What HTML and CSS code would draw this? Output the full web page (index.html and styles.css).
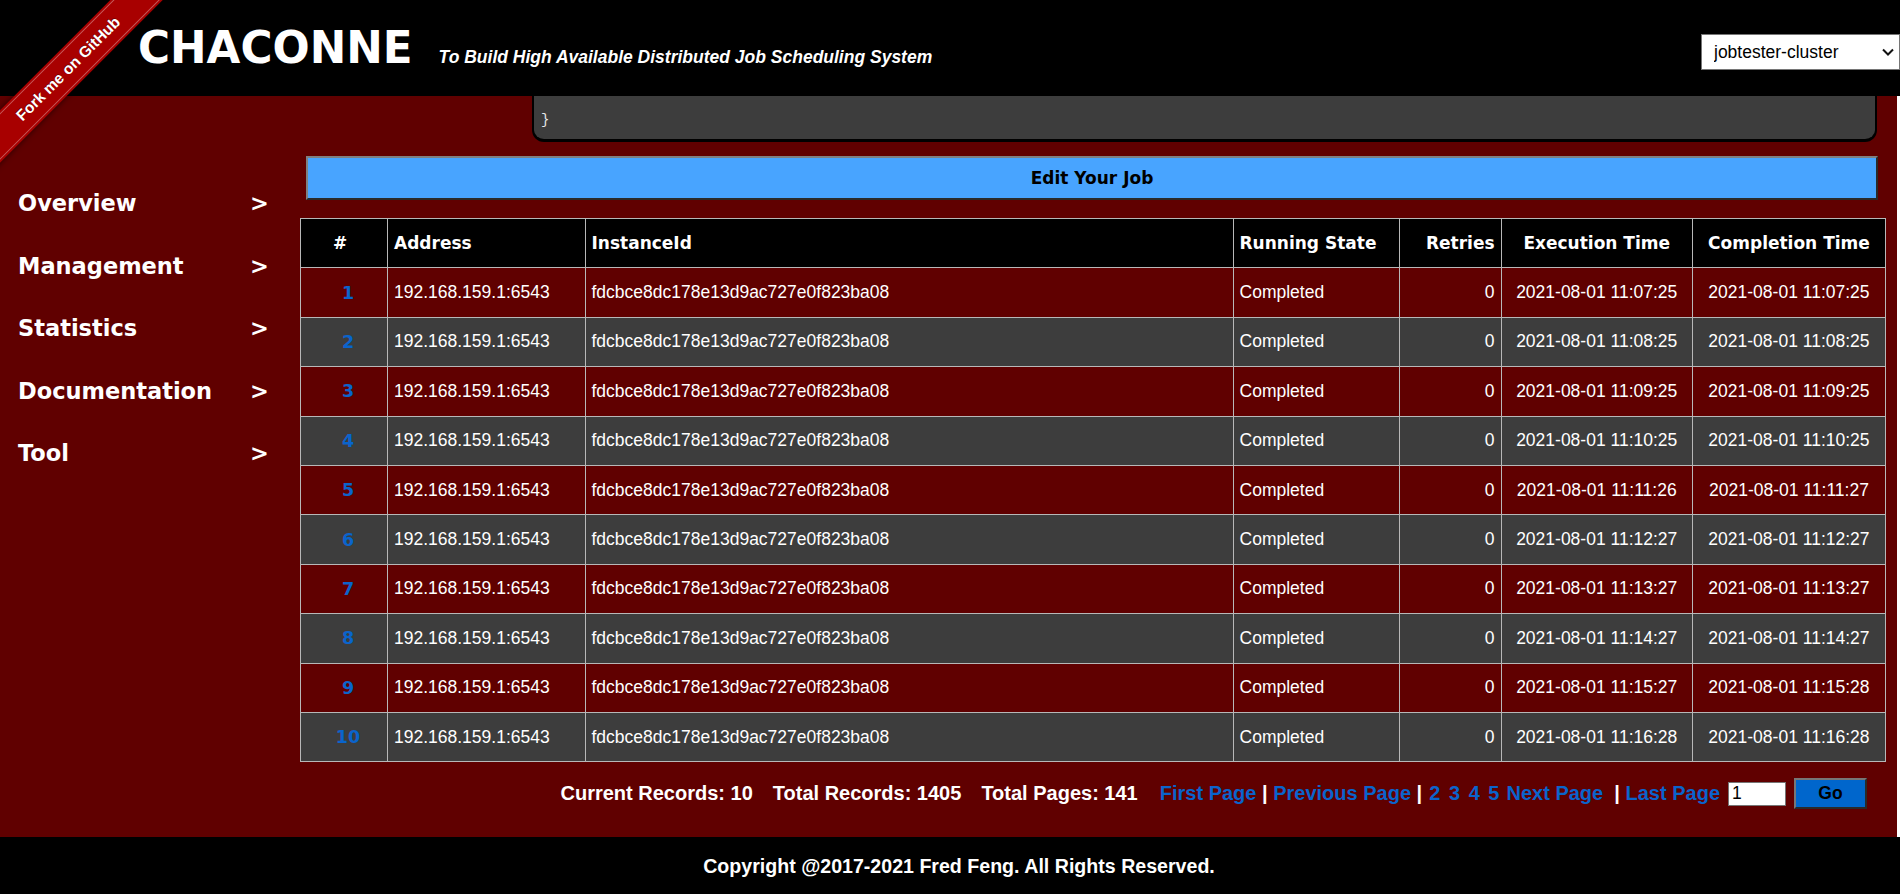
FILE: index.html
```html
<!DOCTYPE html>
<html lang="en">
<head>
<meta charset="utf-8">
<title>Chaconne</title>
<link rel="stylesheet" href="styles.css">
</head>
<body>
<div class="ribbon-wrap"><div class="ribbon">Fork me on GitHub</div></div>
<header class="topbar">
  <div class="brand">
    <span class="brand-title">CHACONNE</span>
    <span class="brand-sub">To Build High Available Distributed Job Scheduling System</span>
  </div>
  <div class="cluster">
    <select class="cluster-select"><option>jobtester-cluster</option></select>
    <svg class="chev" width="12" height="8" viewBox="0 0 12 8"><path d="M1 1.5 L6 6.5 L11 1.5" fill="none" stroke="#111" stroke-width="2"/></svg>
  </div>
</header>
<div class="main">
  <nav class="sidebar">
    <div class="nav-item"><span>Overview</span><span class="arrow">&gt;</span></div>
    <div class="nav-item"><span>Management</span><span class="arrow">&gt;</span></div>
    <div class="nav-item"><span>Statistics</span><span class="arrow">&gt;</span></div>
    <div class="nav-item"><span>Documentation</span><span class="arrow">&gt;</span></div>
    <div class="nav-item"><span>Tool</span><span class="arrow">&gt;</span></div>
  </nav>
  <section class="content">
    <div class="code-box"><pre class="code">}</pre></div>
    <button class="edit-btn">Edit Your Job</button>
    <table class="grid">
      <colgroup>
        <col style="width:87px"><col style="width:197.5px"><col style="width:648px"><col style="width:166px"><col style="width:102px"><col style="width:191.4px"><col style="width:193px">
      </colgroup>
      <thead>
        <tr><th class="c hash">#</th><th>Address</th><th>InstanceId</th><th>Running State</th><th class="r">Retries</th><th class="c">Execution Time</th><th class="c">Completion Time</th></tr>
      </thead>
      <tbody>
        <tr class="odd"><td class="num">1</td><td>192.168.159.1:6543</td><td>fdcbce8dc178e13d9ac727e0f823ba08</td><td>Completed</td><td class="r">0</td><td class="c">2021-08-01 11:07:25</td><td class="c">2021-08-01 11:07:25</td></tr>
        <tr class="even"><td class="num">2</td><td>192.168.159.1:6543</td><td>fdcbce8dc178e13d9ac727e0f823ba08</td><td>Completed</td><td class="r">0</td><td class="c">2021-08-01 11:08:25</td><td class="c">2021-08-01 11:08:25</td></tr>
        <tr class="odd"><td class="num">3</td><td>192.168.159.1:6543</td><td>fdcbce8dc178e13d9ac727e0f823ba08</td><td>Completed</td><td class="r">0</td><td class="c">2021-08-01 11:09:25</td><td class="c">2021-08-01 11:09:25</td></tr>
        <tr class="even"><td class="num">4</td><td>192.168.159.1:6543</td><td>fdcbce8dc178e13d9ac727e0f823ba08</td><td>Completed</td><td class="r">0</td><td class="c">2021-08-01 11:10:25</td><td class="c">2021-08-01 11:10:25</td></tr>
        <tr class="odd"><td class="num">5</td><td>192.168.159.1:6543</td><td>fdcbce8dc178e13d9ac727e0f823ba08</td><td>Completed</td><td class="r">0</td><td class="c">2021-08-01 11:11:26</td><td class="c">2021-08-01 11:11:27</td></tr>
        <tr class="even"><td class="num">6</td><td>192.168.159.1:6543</td><td>fdcbce8dc178e13d9ac727e0f823ba08</td><td>Completed</td><td class="r">0</td><td class="c">2021-08-01 11:12:27</td><td class="c">2021-08-01 11:12:27</td></tr>
        <tr class="odd"><td class="num">7</td><td>192.168.159.1:6543</td><td>fdcbce8dc178e13d9ac727e0f823ba08</td><td>Completed</td><td class="r">0</td><td class="c">2021-08-01 11:13:27</td><td class="c">2021-08-01 11:13:27</td></tr>
        <tr class="even"><td class="num">8</td><td>192.168.159.1:6543</td><td>fdcbce8dc178e13d9ac727e0f823ba08</td><td>Completed</td><td class="r">0</td><td class="c">2021-08-01 11:14:27</td><td class="c">2021-08-01 11:14:27</td></tr>
        <tr class="odd"><td class="num">9</td><td>192.168.159.1:6543</td><td>fdcbce8dc178e13d9ac727e0f823ba08</td><td>Completed</td><td class="r">0</td><td class="c">2021-08-01 11:15:27</td><td class="c">2021-08-01 11:15:28</td></tr>
        <tr class="even"><td class="num">10</td><td>192.168.159.1:6543</td><td>fdcbce8dc178e13d9ac727e0f823ba08</td><td>Completed</td><td class="r">0</td><td class="c">2021-08-01 11:16:28</td><td class="c">2021-08-01 11:16:28</td></tr>
      </tbody>
    </table>
    <div class="pager">
      <span class="stat">Current Records: 10</span>
      <span class="stat">Total Records: 1405</span>
      <span class="stat stat-last">Total Pages: 141</span>
      <span class="links"><a>First Page</a> <span class="sep">|</span> <a>Previous Page</a> <span class="sep">|</span> <a class="pn">2</a> <a class="pn">3</a> <a class="pn">4</a> <a class="pn">5</a> <a>Next Page</a>&nbsp; <span class="sep">|</span> <a>Last Page</a></span>
      <input class="page-input" type="text" value="1">
      <button class="go-btn">Go</button>
    </div>
  </section>
</div>
<footer class="footer">Copyright @2017-2021 Fred Feng. All Rights Reserved.</footer>
</body>
</html>
```
FILE: styles.css
```css
html, body {
  margin: 0;
  padding: 0;
  background: #ffffff;
}
body {
  font-family: "Liberation Sans", Arial, sans-serif;
  color: #fff;
  position: relative;
}
.ribbon-wrap {
  position: absolute;
  left: 0;
  top: 0;
  width: 180px;
  height: 180px;
  overflow: hidden;
  z-index: 10;
  pointer-events: none;
}
.ribbon {
  position: absolute;
  left: -62px;
  top: 49.5px;
  width: 260px;
  height: 37px;
  transform: rotate(-45deg);
  background: #a80000;
  box-shadow: 0 0 6px rgba(0,0,0,0.6);
  color: #fff;
  text-align: center;
  font: bold 15.5px/37px "Liberation Sans", Arial, sans-serif;
  text-shadow: 0 -1px 0 rgba(0,0,0,0.4);
}
.ribbon::before {
  content: "";
  position: absolute;
  left: 0;
  right: 0;
  top: 2px;
  bottom: 2px;
  border-top: 1px solid rgba(255,255,255,0.35);
  border-bottom: 1px solid rgba(255,255,255,0.35);
}
.topbar {
  display: flex;
  align-items: flex-start;
  height: 96px;
  background: #000;
}
.brand {
  display: flex;
  align-items: baseline;
  gap: 26px;
  margin-left: 138px;
  margin-top: 26px;
}
.brand-title {
  font: bold 43.7px/44px "DejaVu Sans", sans-serif;
  color: #fff;
}
.brand-sub {
  font: italic bold 17.5px "Liberation Sans", Arial, sans-serif;
  color: #fff;
}
.cluster {
  position: relative;
  margin-left: auto;
  margin-top: 34px;
  width: 199px;
  height: 36px;
}
.cluster-select {
  appearance: none;
  -webkit-appearance: none;
  width: 199px;
  height: 36px;
  box-sizing: border-box;
  border: 1px solid #767676;
  border-radius: 0;
  background: #fff;
  color: #000;
  padding: 0 0 0 12px;
  font: 17.5px "Liberation Sans", Arial, sans-serif;
}
.chev {
  position: absolute;
  right: 6px;
  top: 14px;
}
.main {
  display: flex;
  background: #600000;
  margin-right: 3px;
}
.sidebar {
  width: 300px;
  flex: none;
  box-sizing: border-box;
  padding-top: 76px;
}
.nav-item {
  display: grid;
  grid-template-columns: 232px auto;
  padding-left: 18px;
  height: 62.5px;
  font: bold 22.5px/62.5px "DejaVu Sans", sans-serif;
  color: #fff;
}
.content {
  flex: 1;
  min-width: 0;
  padding-right: 11px;
}
.code-box {
  box-sizing: border-box;
  height: 46px;
  margin: 0 9px 0 232px;
  background: #3d3d3d;
  border: 2px solid #000;
  border-top: 0;
  border-bottom-width: 3px;
  border-radius: 0 0 12px 12px;
  padding: 15px 7px 0;
}
.code {
  margin: 0;
  font: 14px/18px "Liberation Mono", monospace;
  color: #e8e8e8;
}
.edit-btn {
  display: block;
  box-sizing: border-box;
  width: calc(100% - 14px);
  height: 44px;
  margin: 14px 8px 0 6px;
  background: #48a4ff;
  border: 2px solid;
  border-color: #808080 #2a2a2a #2a2a2a #808080;
  color: #000;
  font: bold 17px "DejaVu Sans", sans-serif;
  padding: 0;
}
.grid {
  width: 100%;
  margin-top: 18px;
  table-layout: fixed;
  border-collapse: collapse;
  border: 1px solid #b8b8b8;
}
.grid th, .grid td {
  border: 1px solid #b8b8b8;
  padding: 0 6px;
  text-align: left;
  white-space: nowrap;
  overflow: hidden;
}
.grid tr {
  height: 49.4px;
}
.grid th {
  background: #000;
  color: #fff;
  font: bold 17px "DejaVu Sans", sans-serif;
}
.grid th.hash {
  padding: 0 10px 0 2px;
}
.grid td {
  font: 17.5px "Liberation Sans", Arial, sans-serif;
  color: #fff;
}
.grid .odd td { background: #600000; }
.grid .even td { background: #3d3d3d; }
.grid .c { text-align: center; }
.grid .r { text-align: right; }
.grid td.num {
  text-align: center;
  padding: 0 2px 0 10px;
  color: #0a64cc;
  font: bold 17.5px "DejaVu Sans", sans-serif;
}
.pager {
  display: flex;
  align-items: center;
  justify-content: flex-end;
  height: 31px;
  margin-top: 16px;
  padding: 0 19px 28px 0;
  font: bold 20px "Liberation Sans", Arial, sans-serif;
  color: #fff;
}
.stat {
  margin-right: 20px;
  white-space: nowrap;
}
.stat-last {
  margin-right: 22px;
}
.links {
  white-space: pre;
}
.links a {
  color: #0a64cc;
}
.links .pn {
  margin: 0 1.5px;
}
.sep {
  color: #fff;
}
.page-input {
  box-sizing: border-box;
  width: 58px;
  height: 24px;
  margin-left: 8px;
  border: 1px solid #767676;
  padding: 0 3px;
  font: 17.5px "Liberation Sans", Arial, sans-serif;
  color: #000;
  background: #fff;
}
.go-btn {
  box-sizing: border-box;
  width: 73px;
  height: 31px;
  margin-left: 8px;
  background: #0066cc;
  border: 2px solid;
  border-color: #777 #2a2a2a #2a2a2a #777;
  color: #000;
  font: bold 17.5px "Liberation Sans", Arial, sans-serif;
  padding: 0;
}
.footer {
  height: 58px;
  background: #000;
  color: #fff;
  text-align: center;
  padding-left: 18px;
  font: bold 19.6px/58px "Liberation Sans", Arial, sans-serif;
}
```
